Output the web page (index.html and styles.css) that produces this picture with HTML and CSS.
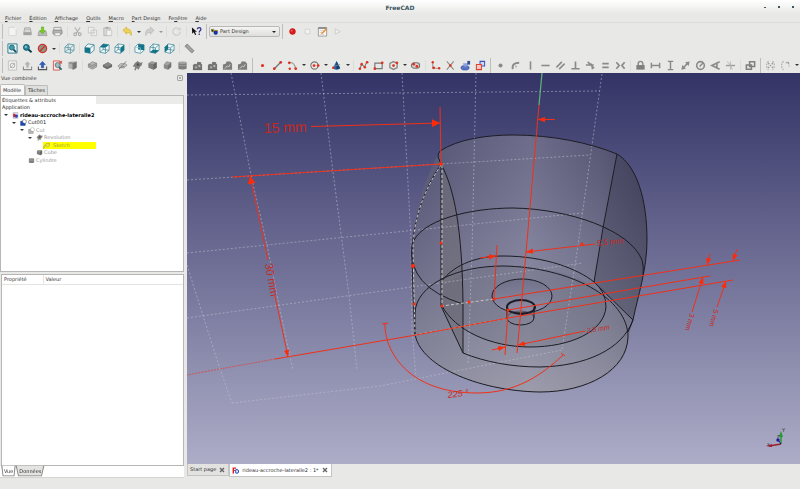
FILE: index.html
```html
<!DOCTYPE html>
<html lang="fr">
<head>
<meta charset="UTF-8">
<meta name="viewport" content="width=device-width, initial-scale=1.0">
<title>FreeCAD</title>
<link rel="stylesheet" href="styles.css">
</head>
<body>
<svg class="defs" aria-hidden="true">
  <defs>
    <!-- file and edit -->
    <symbol id="i-new" viewBox="0 0 12 12"><path d="M2 1.500h6l2 2v7H2z" fill="#f4f4f3" stroke="#cfcfcd" stroke-width=".8"/><path d="M8 1v3h3" fill="#fff" stroke="#dededc" stroke-width=".6"/></symbol>
    <symbol id="i-open" viewBox="0 0 12 12"><path d="M3 2h6l1 5H2z" fill="#ddd" stroke="#8c8c8a" stroke-width=".7"/><path d="M1.500 7h9v3h-9z" fill="#a2a2a0"/><path d="M3.500 4h5" stroke="#999" stroke-width=".6"/></symbol>
    <symbol id="i-save" viewBox="0 0 12 12"><path d="M2 6h8l1 4.500H1z" fill="#b9b9b7" stroke="#8f8f8d" stroke-width=".6"/><path d="M4.800 1h2.400v4h2L6 8.500 2.800 5h2z" fill="#73d216" stroke="#4e9a06" stroke-width=".5"/></symbol>
    <symbol id="i-print" viewBox="0 0 12 12"><path d="M2 1.500h8V5H2z" fill="#e8e8e6" stroke="#888" stroke-width=".7"/><rect x="1" y="4.500" width="10" height="4.500" rx="1" fill="#b5b5b3" stroke="#777" stroke-width=".7"/><path d="M3 7.500h6v3H3z" fill="#f5f5f5" stroke="#888" stroke-width=".6"/></symbol>
    <symbol id="i-cut" viewBox="0 0 12 12"><path d="M3 1.500l4.500 6.500M9 1.500L4.500 8" stroke="#b4b4b2" stroke-width="1.200"/><circle cx="3.500" cy="9" r="1.500" fill="none" stroke="#aaa" stroke-width="1.100"/><circle cx="8.500" cy="9" r="1.500" fill="none" stroke="#aaa" stroke-width="1.100"/></symbol>
    <symbol id="i-copy" viewBox="0 0 12 12"><path d="M1.500 1.500h6v6h-6zM4.500 4.500h6v6h-6z" fill="#efefed" stroke="#bfbfbd" stroke-width=".8"/><path d="M6 7h3M6 8.500h3" stroke="#c8c8c6" stroke-width=".6"/></symbol>
    <symbol id="i-paste" viewBox="0 0 12 12"><path d="M2 2h7v8.500H2z" fill="#d9d9d7" stroke="#adadab" stroke-width=".8"/><path d="M4 1h3v2H4z" fill="#a9a9a7"/><path d="M5 4.500h5.500v6H5z" fill="#f2f2f0" stroke="#bcbcba" stroke-width=".7"/></symbol>
    <symbol id="i-undo" viewBox="0 0 12 12"><path d="M1 4.500L5 1v2.200c4 0 6 2 5 7.300-.7-2.700-2-3.500-5-3.500v2z" fill="#edd25a" stroke="#c4a000" stroke-width=".5"/></symbol>
    <symbol id="i-redo" viewBox="0 0 12 12"><path d="M11 4.500L7 1v2.200c-4 0-6 2-5 7.300.7-2.700 2-3.500 5-3.500v2z" fill="#cfcfcd" stroke="#aaa" stroke-width=".5"/></symbol>
    <symbol id="i-refresh" viewBox="0 0 12 12"><path d="M10 6a4 4 0 1 1-1.500-3" fill="none" stroke="#d0d0ce" stroke-width="1.500"/><path d="M6.500 4.500H10.500V1z" fill="#d0d0ce"/></symbol>
    <symbol id="i-what" viewBox="0 0 12 12"><path d="M1 1.500l.3 7 1.700-1.600 1.500 3 1.200-.6-1.500-2.900 2.300-.2z" fill="#111"/><path d="M7 3.600C7 1 10.800 1.200 10.800 3.500 10.800 5 9 5.200 9 7" fill="none" stroke="#2d2d8e" stroke-width="1.400"/><circle cx="9" cy="9" r=".9" fill="#2d2d8e"/></symbol>
    <symbol id="i-record" viewBox="0 0 12 12"><circle cx="6" cy="6" r="3.200" fill="#e01b1b" stroke="#b40000" stroke-width=".5"/><circle cx="5" cy="5" r="1" fill="#f26d6d"/></symbol>
    <symbol id="i-stop" viewBox="0 0 12 12"><path d="M3.500 3.500h5v5h-5z" fill="#f3f3f1" stroke="#cbcbc9" stroke-width=".8"/></symbol>
    <symbol id="i-edit" viewBox="0 0 12 12"><path d="M1.500 2h9v9h-9z" fill="#f7f7f5" stroke="#777" stroke-width=".7"/><path d="M1.500 1.500h9v1.500h-9z" fill="#777"/><path d="M3 5h5M3 7h3M3 9h5" stroke="#bbb" stroke-width=".6"/><path d="M5 8.500L10.500 3" stroke="#f08a24" stroke-width="1.500"/></symbol>
    <symbol id="i-play" viewBox="0 0 12 12"><path d="M3.500 3l5.500 3-5.500 3z" fill="#eee" stroke="#c4c4c2" stroke-width=".8"/></symbol>
    <symbol id="i-part" viewBox="0 0 12 12"><path d="M1 2h4v2h6v3H5L1 6z" fill="#f0c419" stroke="#333" stroke-width=".6"/><path d="M1 2l3 2v3L1 5z" fill="#222"/><rect x="5" y="5" width="6" height="6" rx="2" fill="#1236b8" stroke="#0a1c66" stroke-width=".6"/></symbol>

    <!-- views -->
    <symbol id="i-fit" viewBox="0 0 12 12"><path d="M1 1h10v10H1z" fill="#e8f3f5" stroke="#17697c" stroke-width=".9"/><path d="M7 7l3 3" stroke="#0e4c5c" stroke-width="1.900"/><circle cx="5.300" cy="5" r="2.700" fill="#3f9cb0" stroke="#135f70" stroke-width=".9"/></symbol>
    <symbol id="i-zoom" viewBox="0 0 12 12"><path d="M7 7l3.500 3" stroke="#0b4250" stroke-width="2.200"/><circle cx="4.800" cy="4.800" r="3.200" fill="#2b8499" stroke="#0e5365" stroke-width="1"/><circle cx="4.200" cy="4.200" r="1.300" fill="#86c3cf"/></symbol>
    <symbol id="i-draw" viewBox="0 0 12 12"><circle cx="6" cy="6" r="4.500" fill="#8b9a91" stroke="#cf2e20" stroke-width="1.400"/><path d="M9.200 2.800L2.800 9.200" stroke="#cf2e20" stroke-width="1.500"/></symbol>
    <symbol id="i-wire" viewBox="0 0 12 12"><path d="M1 4.500l6 .8v6L1 10zM4.500 1l6.500 1v6l-6.500-1zM1 4.500L4.500 1M7 5.300L11 2M7 11.300L11 8M1 10l3.500-3" fill="none" stroke="#4a93a2" stroke-width=".8"/></symbol>
    <symbol id="i-front" viewBox="0 0 12 12"><path d="M1 4.500L4.500 1 11 2v6l-4 3.300L1 10z" fill="#eef6f7" stroke="#2b7c8e" stroke-width=".8"/><path d="M7 5.300L11 2" stroke="#2b7c8e" stroke-width=".8"/><path d="M1 4.500l6 .8v6L1 10z" fill="#137388"/></symbol>
    <symbol id="i-top" viewBox="0 0 12 12"><path d="M1 4.500L4.500 1 11 2v6l-4 3.300L1 10zM7 5.300v6M4.500 4v3L11 8M1 10l3.500-3" fill="#eef6f7" stroke="#2b7c8e" stroke-width=".7"/><path d="M1 4.500L4.500 1 11 2 7 5.300z" fill="#137388"/></symbol>
    <symbol id="i-right" viewBox="0 0 12 12"><path d="M1 4.500L4.500 1 11 2v6l-4 3.300L1 10zM1 4.500l6 .8M4.500 1v6l3 .5M1 10l3.500-3" fill="#eef6f7" stroke="#2b7c8e" stroke-width=".7"/><path d="M7 5.300L11 2v6l-4 3.300z" fill="#137388"/></symbol>
    <symbol id="i-rear" viewBox="0 0 12 12"><path d="M1 4.500L4.500 1 11 2v6l-4 3.300L1 10z" fill="#eef6f7" stroke="#2b7c8e" stroke-width=".7"/><path d="M4.500 1L11 2v6l-6.500-1z" fill="#137388"/><path d="M1 4.500l6 .8v6" fill="none" stroke="#8fc3cd" stroke-width=".8"/></symbol>
    <symbol id="i-bottom" viewBox="0 0 12 12"><path d="M1 4.500L4.500 1 11 2v6l-4 3.300L1 10zM1 4.500l6 .8v6M7 5.300L11 2M4.500 1v6" fill="#eef6f7" stroke="#2b7c8e" stroke-width=".7"/><path d="M1 10l3.500-3L11 8l-4 3.300z" fill="#137388"/></symbol>
    <symbol id="i-left" viewBox="0 0 12 12"><path d="M1 4.500L4.500 1 11 2v6l-4 3.300L1 10zM1 4.500l6 .8v6M7 5.300L11 2M4.500 7L11 8" fill="#eef6f7" stroke="#2b7c8e" stroke-width=".7"/><path d="M1 4.500L4.500 1v6L1 10z" fill="#137388"/></symbol>
    <symbol id="i-ruler" viewBox="0 0 12 12"><path d="M3.500 1L11 8.500 8.500 11 1 3.500z" fill="#9a9a98" stroke="#777" stroke-width=".7"/><path d="M4.500 3.500l-1 1M6 5L5 6M7.500 6.500l-1 1M9 8l-1 1" stroke="#ddd" stroke-width=".6"/></symbol>

    <!-- part design -->
    <symbol id="i-sketch" viewBox="0 0 12 12"><path d="M1.500 1h9v10h-9z" fill="#f0f0ee" stroke="#b5b5b3" stroke-width=".8"/><circle cx="6" cy="6" r="2.500" fill="none" stroke="#aaa"/><path d="M3 9l6-6" stroke="#aaa" stroke-width=".8"/></symbol>
    <symbol id="i-tray" viewBox="0 0 12 12"><path d="M1.500 7v3.500h9V7" fill="none" stroke="#8b8b89" stroke-width="1.200"/><path d="M5.200 8V4.500H3.500L6 2l2.500 2.500H6.800V8z" fill="#b8b8b6" stroke="#999" stroke-width=".5"/></symbol>
    <symbol id="i-leave" viewBox="0 0 12 12"><path d="M1.500 7v3.500h9V7" fill="none" stroke="#555" stroke-width="1.200"/><path d="M4.800 8.500V5H2.800L6 1.500 9.200 5h-2v3.500z" fill="#2460c8" stroke="#123a86" stroke-width=".5"/></symbol>
    <symbol id="i-viewsk" viewBox="0 0 12 12"><path d="M1.500 1h7v10h-7z" fill="#f6e5e3" stroke="#d34a3d" stroke-width=".9"/><path d="M7.500 7.500l3 3" stroke="#17697c" stroke-width="1.800"/><circle cx="6.200" cy="5.500" r="2.700" fill="#a2bac0" stroke="#56717a" stroke-width=".9"/><path d="M8 1h3v3H8z" fill="#d96257"/></symbol>
    <symbol id="i-solid" viewBox="0 0 12 12"><path d="M1.500 3L4 1.500h6.500v7L8 10.500 1.500 9z" fill="#b2b2b0"/><path d="M6 3.500l4.500-2v7L6 10.500z" fill="#767674"/><path d="M1.500 3L6 3.500" stroke="#666" stroke-width=".7"/></symbol>
    <symbol id="i-pad" viewBox="0 0 12 12"><path d="M1.500 4.500L6 2l4.500 1.500v4L6 10 1.500 8z" fill="#b9b9b7" stroke="#888" stroke-width=".8"/><path d="M1.500 6.200L6 8l4.500-2.600M1.500 4.500L6 6l4.500-2.500" fill="none" stroke="#7d7d7b" stroke-width=".9"/></symbol>
    <symbol id="i-pocket" viewBox="0 0 12 12"><path d="M1 5.500L6.500 2.500 11 5v2.500L5.500 10 1 7.500z" fill="#6c6c6a"/><path d="M1 5.500l5.500-3L11 5 5.500 7.600z" fill="#868684"/></symbol>
    <symbol id="i-groove" viewBox="0 0 12 12"><path d="M1 6.500L4 4h5l2 1.500L8 8.500H3z" fill="#c0c0be" stroke="#8c8c8a" stroke-width=".8"/><path d="M2 10L10 1.500M4 8l4-1" stroke="#7d7d7b" stroke-width="1"/></symbol>
    <symbol id="i-rev" viewBox="0 0 12 12"><path d="M3 3.500L6 1l3 2 2.500-.5-1 3.500-2 1.500-1 3-2.500-1.500-1 2.500-1.500-.5 1-3.500L.8 7z" fill="#80807e"/><circle cx="6.500" cy="5" r="1.500" fill="#555553"/></symbol>
    <symbol id="i-box" viewBox="0 0 12 12"><path d="M1.500 3.500L5 1.500l5.500 1v6L7 10.500l-5.500-2z" fill="#7e7e7c"/><path d="M1.500 3.500L5 1.500l5.500 1L7 4.500z" fill="#9d9d9b"/><path d="M7 4.500l3.500-2v6L7 10.500z" fill="#666664"/></symbol>
    <symbol id="i-cham" viewBox="0 0 12 12"><path d="M2 5l3-3.500 5 1v5L6.500 10.500 2 9z" fill="#8a8a88"/><path d="M5 1.500l5 1L6.500 6 2 5z" fill="#a3a3a1"/><path d="M6.500 6L10 2.500v5l-3.500 3z" fill="#757573"/></symbol>
    <symbol id="i-cyl" viewBox="0 0 12 12"><path d="M1.500 3h9v6.500c-2 1.200-7 1.200-9 0z" fill="#80807e"/><ellipse cx="6" cy="3" rx="4.500" ry="1.300" fill="#a4a4a2"/><path d="M1.500 6h9" stroke="#a7a7a5" stroke-width=".8"/></symbol>
    <symbol id="i-patt" viewBox="0 0 12 12"><path d="M1 5.500L3 4l2 .5L6 2l4 .5V4l1 .5v6H1z" fill="#757573"/><path d="M3.500 7h2v2h-2zM7 5.500h2v2H7z" fill="#b9b9b7"/><path d="M1 10.500h10" stroke="#555" stroke-width=".8"/></symbol>
    <symbol id="i-multi" viewBox="0 0 12 12"><path d="M1 5l3-1 1-2.500h4L11 4v6.500H1z" fill="#7d7d7b"/><path d="M3 9.500l2.500-3 2 1L9 4.500" fill="none" stroke="#cacac8" stroke-width="1"/></symbol>

    <!-- sketcher geometry -->
    <symbol id="i-point" viewBox="0 0 12 12"><circle cx="6" cy="6" r="1.700" fill="#e0301e"/></symbol>
    <symbol id="i-line" viewBox="0 0 12 12"><path d="M2.500 9.500l7-7" stroke="#777" stroke-width="1.500"/><g fill="#d6301e"><circle cx="2.500" cy="9.500" r="1.500"/><circle cx="9.500" cy="2.500" r="1.500"/></g></symbol>
    <symbol id="i-arc" viewBox="0 0 12 12"><path d="M2 3c4-1 7 2 7.500 7" fill="none" stroke="#999" stroke-width="1.200"/><g fill="#e0301e"><circle cx="2.500" cy="3" r="1.500"/><circle cx="9.500" cy="9.500" r="1.500"/><circle cx="3" cy="9.500" r="1.300"/></g></symbol>
    <symbol id="i-circle" viewBox="0 0 12 12"><circle cx="6" cy="6" r="4" fill="none" stroke="#777" stroke-width="1.200"/><g fill="#e0301e"><circle cx="5.500" cy="6" r="1.500"/><circle cx="10" cy="6" r="1.500"/></g></symbol>
    <symbol id="i-conic" viewBox="0 0 12 12"><path d="M6 1l4 8c-1 2-7 2-8 0z" fill="#1d63a8"/><path d="M6 1l4 8-4 1z" fill="#123d70"/><path d="M3 7l7-2" stroke="#888" stroke-width=".8"/><circle cx="2.500" cy="8.500" r="1.400" fill="#e0301e"/></symbol>
    <symbol id="i-poly" viewBox="0 0 12 12"><path d="M2 9.500l2-5 3 3 3-6" fill="none" stroke="#777" stroke-width="1.200"/><g fill="#e0301e"><circle cx="2" cy="9.500" r="1.400"/><circle cx="4" cy="4.500" r="1.400"/><circle cx="7.500" cy="8" r="1.400"/><circle cx="10" cy="2.500" r="1.400"/></g></symbol>
    <symbol id="i-rect" viewBox="0 0 12 12"><path d="M2 3.500h8v6H2z" fill="none" stroke="#777" stroke-width="1.300"/><g fill="#e0301e"><circle cx="2" cy="9.500" r="1.500"/><circle cx="10" cy="3" r="1.500"/></g></symbol>
    <symbol id="i-hexa" viewBox="0 0 12 12"><path d="M6 1.700l4 2v4.600l-4 2-4-2V3.700z" fill="none" stroke="#888" stroke-width="1.400"/><g fill="#e0301e"><circle cx="6" cy="6" r="1.500"/><circle cx="9.700" cy="3" r="1.500"/></g></symbol>
    <symbol id="i-slot" viewBox="0 0 12 12"><rect x="1.500" y="3" width="9" height="6" rx="3" fill="#d0d0ce" stroke="#777" stroke-width="1.200"/><g fill="#e0301e"><circle cx="4" cy="4.500" r="1.500"/><circle cx="7.500" cy="7" r="1.500"/></g></symbol>
    <symbol id="i-fillet" viewBox="0 0 12 12"><path d="M3 2v7h7" fill="none" stroke="#999" stroke-width="1.200"/><g fill="#e0301e"><circle cx="3" cy="2.500" r="1.300"/><circle cx="4" cy="8.500" r="1.500"/><circle cx="10" cy="9" r="1.300"/></g></symbol>
    <symbol id="i-trim" viewBox="0 0 12 12"><path d="M2 1.500l7.500 9M9.500 1.500L2 10.500" stroke="#888" stroke-width="1.100"/><circle cx="5.800" cy="6" r="1.400" fill="#e0301e"/></symbol>
    <symbol id="i-ext" viewBox="0 0 12 12"><ellipse cx="5.500" cy="8.500" rx="4.500" ry="2.500" fill="#5a74c4" stroke="#2f4590" stroke-width=".6"/><path d="M3 3.500h6l-1 3.500H4.500z" fill="#8da2dd"/><path d="M8 1h3v4H8z" fill="#354b96"/></symbol>
    <symbol id="i-constr" viewBox="0 0 12 12"><path d="M5.500 1.500h5v5h-5z" fill="#d3d8f2" stroke="#3c50c0" stroke-width="1.100"/><path d="M1.500 5h5.500v5.500H1.500z" fill="#f4c9c5" stroke="#e0402e" stroke-width="1.100"/></symbol>

    <!-- constraints -->
    <symbol id="c-point" viewBox="0 0 12 12"><circle cx="6" cy="6" r="2.200" fill="#8a8a88"/></symbol>
    <symbol id="c-onobj" viewBox="0 0 12 12"><path d="M3 10C2 5 5 3 10 3" fill="none" stroke="#8a8a88" stroke-width="2"/><circle cx="6.500" cy="7" r="1.100" fill="#b0b0ae"/></symbol>
    <symbol id="c-vert" viewBox="0 0 12 12"><path d="M6 1.500v9" stroke="#8a8a88" stroke-width="1.700"/></symbol>
    <symbol id="c-hori" viewBox="0 0 12 12"><path d="M1.500 6h9" stroke="#8a8a88" stroke-width="1.700"/></symbol>
    <symbol id="c-para" viewBox="0 0 12 12"><path d="M1.500 8l6-6M4.500 10l6-6" stroke="#8a8a88" stroke-width="1.700"/></symbol>
    <symbol id="c-perp" viewBox="0 0 12 12"><path d="M6 1.500v8M1.500 9.500h9" stroke="#8a8a88" stroke-width="1.800"/></symbol>
    <symbol id="c-tan" viewBox="0 0 12 12"><path d="M3 2l7 7M1 5.500h8.500M8 10c0-3 0-5-2-6" fill="none" stroke="#8a8a88" stroke-width="1.700"/></symbol>
    <symbol id="c-equal" viewBox="0 0 12 12"><path d="M2.500 4h7M2.500 8h7" stroke="#8a8a88" stroke-width="2"/></symbol>
    <symbol id="c-sym" viewBox="0 0 12 12"><path d="M1.500 2.500L4.500 6l-3 3.500M10.500 2.500L7.500 6l3 3.500" fill="none" stroke="#8a8a88" stroke-width="1.900"/></symbol>
    <symbol id="c-lock" viewBox="0 0 12 12"><path d="M1.500 5.500h9V10.500h-9z" fill="#7f7f7d"/><path d="M3.500 6V4a2.500 2.500 0 0 1 5 0v2" fill="none" stroke="#8a8a88" stroke-width="1.600"/></symbol>
    <symbol id="c-hdist" viewBox="0 0 12 12"><path d="M1.500 3v6M10.500 3v6M1.500 6h9" stroke="#8a8a88" stroke-width="1.600"/></symbol>
    <symbol id="c-vdist" viewBox="0 0 12 12"><path d="M3 1.500h6M3 10.500h6M6 1.500v9" stroke="#8a8a88" stroke-width="1.600"/></symbol>
    <symbol id="c-dist" viewBox="0 0 12 12"><path d="M3 9l6-6" stroke="#8a8a88" stroke-width="1.900"/><path d="M1.500 10.500l1-5L6.500 9.500zM10.500 1.500l-1 5L5.500 2.500z" fill="#8a8a88"/></symbol>
    <symbol id="c-rad" viewBox="0 0 12 12"><circle cx="6" cy="6" r="4.200" fill="none" stroke="#8a8a88" stroke-width="1.700"/><path d="M5 7l4-4" stroke="#8a8a88" stroke-width="1.600"/></symbol>
    <symbol id="c-angle" viewBox="0 0 12 12"><path d="M10.500 2L2 6l8.500 4M7.500 4v4.500" fill="none" stroke="#8a8a88" stroke-width="1.800"/></symbol>
    <symbol id="c-snell" viewBox="0 0 12 12"><path d="M1 6h10" stroke="#9a9a98" stroke-width="1.500"/><path d="M2.500 1.500L6 6l2 4.500M6 1.500v9" fill="none" stroke="#b4b4b2" stroke-width=".9"/></symbol>
    <symbol id="c-toggle" viewBox="0 0 12 12"><path d="M5 2h5.500v5H5zM1.500 5.500H7v4.500H1.500z" fill="none" stroke="#80807e" stroke-width="1.700"/></symbol>
    <symbol id="c-close" viewBox="0 0 12 12"><path d="M4 1.500C1 3 1 9 4 10.500M8 1.500c3 1.500 3 7.500 0 9" fill="none" stroke="#b4b4b2" stroke-width="1.400" stroke-dasharray="2 1"/><g fill="#999"><circle cx="4" cy="4" r=".9"/><circle cx="4" cy="8" r=".9"/><circle cx="6" cy="6" r=".9"/><circle cx="8" cy="4" r=".9"/><circle cx="8" cy="8" r=".9"/></g></symbol>
    <symbol id="c-connect" viewBox="0 0 12 12"><path d="M4 1.500C1 3 1 9 4 10.500M6 3c3-1 4 1 4 4" fill="none" stroke="#b4b4b2" stroke-width="1.400" stroke-dasharray="2 1"/><circle cx="9" cy="3" r="1" fill="#999"/></symbol>

    <!-- tree -->
    <symbol id="t-doc" viewBox="0 0 12 12"><path d="M2 1h8v10H2z" fill="#e4e6f4" stroke="#889" stroke-width=".7"/><path d="M2 3h4v6H2z" fill="#d22"/><circle cx="7.500" cy="7" r="2.800" fill="#2246b4"/></symbol>
    <symbol id="t-cut" viewBox="0 0 12 12"><circle cx="7.500" cy="4.500" r="3.500" fill="#fff" stroke="#445" stroke-width=".9"/><path d="M1 4h3c0 2 2 4 5 4v3H1z" fill="#1e49bd" stroke="#122b78" stroke-width=".7"/></symbol>
    <symbol id="t-cut2" viewBox="0 0 12 12"><circle cx="7.500" cy="4.500" r="3.500" fill="#fff" stroke="#aaa" stroke-width=".9"/><path d="M1 4h3c0 2 2 4 5 4v3H1z" fill="#b5b5b3" stroke="#888" stroke-width=".7"/></symbol>
    <symbol id="t-sketch" viewBox="0 0 12 12"><path d="M1 8l4-5 6-1v4L8 9 5 6l-4 5z" fill="#e6e64a" stroke="#8f8f22" stroke-width=".8"/></symbol>
    <symbol id="i-free" viewBox="0 0 12 12"><path d="M1 1h6v2.200H3.500V5H6v2H3.500v4H1z" fill="#e0201b"/><path d="M6.500 5a3 3 0 1 1 0 5z" fill="#fff" stroke="#1b48c4" stroke-width="1.800"/></symbol>
    <symbol id="i-x" viewBox="0 0 12 12"><path d="M2 2l8 8M10 2l-8 8" stroke="#666" stroke-width="2.800"/></symbol>
    <symbol id="i-dockx" viewBox="0 0 12 12"><rect x="1" y="1" width="10" height="10" rx="1.500" fill="#eee" stroke="#888" stroke-width="1.500"/><path d="M3.500 8.500l5-5M3.500 3.500l5 5" stroke="#888" stroke-width="1.300"/></symbol>
    <marker id="arrow" viewBox="0 0 8 8" refX="8" refY="4" markerWidth="7" markerHeight="7" markerUnits="userSpaceOnUse" orient="auto"><path d="M0 1L8 4 0 7z" fill="#ff2a08"/></marker>
    <marker id="arrow-big" viewBox="0 0 8 8" refX="8" refY="4" markerWidth="8" markerHeight="8" markerUnits="userSpaceOnUse" orient="auto"><path d="M0 0L8 4 0 8z" fill="#ff2a08"/></marker>
  </defs>
</svg>

<div class="window">
  <header class="titlebar">
    <h1>FreeCAD</h1>
    <div class="wm">
      <button class="wm-min" aria-label="Réduire"></button>
      <button aria-label="Agrandir"></button>
      <button aria-label="Fermer"></button>
    </div>
  </header>

  <nav class="menubar">
    <a href="#"><u>F</u>ichier</a>
    <a href="#"><u>É</u>dition</a>
    <a href="#"><u>A</u>ffichage</a>
    <a href="#"><u>O</u>utils</a>
    <a href="#"><u>M</u>acro</a>
    <a href="#"><u>P</u>art Design</a>
    <a href="#">Fe<u>n</u>être</a>
    <a href="#"><u>A</u>ide</a>
  </nav>

  <div class="toolbar">
    <span class="handle"></span>
    <button aria-label="Nouveau"><svg><use href="#i-new"/></svg></button>
    <button aria-label="Ouvrir"><svg><use href="#i-open"/></svg></button>
    <button aria-label="Enregistrer"><svg><use href="#i-save"/></svg></button>
    <button aria-label="Imprimer"><svg><use href="#i-print"/></svg></button>
    <span class="sep"></span>
    <button aria-label="Couper"><svg><use href="#i-cut"/></svg></button>
    <button aria-label="Copier"><svg><use href="#i-copy"/></svg></button>
    <button aria-label="Coller"><svg><use href="#i-paste"/></svg></button>
    <span class="sep"></span>
    <button aria-label="Annuler"><svg><use href="#i-undo"/></svg></button>
    <button class="more" aria-label="Liste des annulations"></button>
    <button aria-label="Rétablir"><svg><use href="#i-redo"/></svg></button>
    <button class="more off" aria-label="Liste à rétablir"></button>
    <span class="sep"></span>
    <button aria-label="Rafraîchir"><svg><use href="#i-refresh"/></svg></button>
    <span class="sep"></span>
    <button aria-label="Qu'est-ce que c'est ?"><svg><use href="#i-what"/></svg></button>
    <span class="handle"></span>
    <div class="workbench">
      <svg><use href="#i-part"/></svg>
      <select aria-label="Atelier"><option>Part Design</option></select>
    </div>
    <span class="handle"></span>
    <button aria-label="Enregistrer une macro"><svg><use href="#i-record"/></svg></button>
    <button aria-label="Arrêter"><svg><use href="#i-stop"/></svg></button>
    <button aria-label="Macros"><svg><use href="#i-edit"/></svg></button>
    <button aria-label="Exécuter"><svg><use href="#i-play"/></svg></button>
  </div>

  <div class="toolbar">
    <span class="handle"></span>
    <button aria-label="Tout afficher"><svg><use href="#i-fit"/></svg></button>
    <button aria-label="Zoom"><svg><use href="#i-zoom"/></svg></button>
    <button aria-label="Style de représentation"><svg><use href="#i-draw"/></svg></button>
    <button class="more" aria-label="Styles"></button>
    <span class="sep"></span>
    <button aria-label="Axonométrique"><svg><use href="#i-wire"/></svg></button>
    <span class="sep"></span>
    <button aria-label="Face"><svg><use href="#i-front"/></svg></button>
    <button aria-label="Dessus"><svg><use href="#i-top"/></svg></button>
    <button aria-label="Droite"><svg><use href="#i-right"/></svg></button>
    <span class="sep"></span>
    <button aria-label="Arrière"><svg><use href="#i-rear"/></svg></button>
    <button aria-label="Dessous"><svg><use href="#i-bottom"/></svg></button>
    <button aria-label="Gauche"><svg><use href="#i-left"/></svg></button>
    <span class="sep"></span>
    <button aria-label="Mesurer"><svg><use href="#i-ruler"/></svg></button>
  </div>

  <div class="toolbar">
    <span class="handle"></span>
    <button aria-label="Nouvelle esquisse"><svg><use href="#i-sketch"/></svg></button>
    <button aria-label="Modifier l'esquisse"><svg><use href="#i-tray"/></svg></button>
    <button aria-label="Quitter l'esquisse"><svg><use href="#i-leave"/></svg></button>
    <button aria-label="Vue de l'esquisse"><svg><use href="#i-viewsk"/></svg></button>
    <button aria-label="Appliquer l'esquisse"><svg><use href="#i-solid"/></svg></button>
    <span class="sep"></span>
    <button aria-label="Protrusion"><svg><use href="#i-pad"/></svg></button>
    <button aria-label="Cavité"><svg><use href="#i-pocket"/></svg></button>
    <button aria-label="Rainure"><svg><use href="#i-groove"/></svg></button>
    <button aria-label="Révolution"><svg><use href="#i-rev"/></svg></button>
    <button aria-label="Congé"><svg><use href="#i-box"/></svg></button>
    <button aria-label="Chanfrein"><svg><use href="#i-cham"/></svg></button>
    <button aria-label="Dépouille"><svg><use href="#i-cyl"/></svg></button>
    <button aria-label="Symétrie"><svg><use href="#i-patt"/></svg></button>
    <button aria-label="Répétition linéaire"><svg><use href="#i-patt"/></svg></button>
    <button aria-label="Répétition circulaire"><svg><use href="#i-multi"/></svg></button>
    <button aria-label="Transformation multiple"><svg><use href="#i-multi"/></svg></button>
    <span class="handle"></span>
    <button aria-label="Point"><svg><use href="#i-point"/></svg></button>
    <button aria-label="Ligne"><svg><use href="#i-line"/></svg></button>
    <button aria-label="Arc"><svg><use href="#i-arc"/></svg></button>
    <button class="more" aria-label="Arcs"></button>
    <button aria-label="Cercle"><svg><use href="#i-circle"/></svg></button>
    <button class="more" aria-label="Cercles"></button>
    <button aria-label="Conique"><svg><use href="#i-conic"/></svg></button>
    <button class="more" aria-label="Coniques"></button>
    <span class="sep"></span>
    <button aria-label="Polyligne"><svg><use href="#i-poly"/></svg></button>
    <button aria-label="Rectangle"><svg><use href="#i-rect"/></svg></button>
    <button aria-label="Polygone"><svg><use href="#i-hexa"/></svg></button>
    <button class="more" aria-label="Polygones"></button>
    <button aria-label="Rainure droite"><svg><use href="#i-slot"/></svg></button>
    <span class="sep"></span>
    <button aria-label="Congé d'esquisse"><svg><use href="#i-fillet"/></svg></button>
    <button aria-label="Ajuster"><svg><use href="#i-trim"/></svg></button>
    <button aria-label="Géométrie externe"><svg><use href="#i-ext"/></svg></button>
    <button aria-label="Construction"><svg><use href="#i-constr"/></svg></button>
    <span class="handle"></span>
    <button aria-label="Coïncidence"><svg><use href="#c-point"/></svg></button>
    <button aria-label="Point sur objet"><svg><use href="#c-onobj"/></svg></button>
    <button aria-label="Verticale"><svg><use href="#c-vert"/></svg></button>
    <button aria-label="Horizontale"><svg><use href="#c-hori"/></svg></button>
    <button aria-label="Parallèle"><svg><use href="#c-para"/></svg></button>
    <button aria-label="Perpendiculaire"><svg><use href="#c-perp"/></svg></button>
    <button aria-label="Tangente"><svg><use href="#c-tan"/></svg></button>
    <button aria-label="Égalité"><svg><use href="#c-equal"/></svg></button>
    <button aria-label="Contrainte de symétrie"><svg><use href="#c-sym"/></svg></button>
    <span class="sep"></span>
    <button aria-label="Verrouiller"><svg><use href="#c-lock"/></svg></button>
    <button aria-label="Distance horizontale"><svg><use href="#c-hdist"/></svg></button>
    <button aria-label="Distance verticale"><svg><use href="#c-vdist"/></svg></button>
    <button aria-label="Distance"><svg><use href="#c-dist"/></svg></button>
    <button aria-label="Rayon"><svg><use href="#c-rad"/></svg></button>
    <button aria-label="Angle"><svg><use href="#c-angle"/></svg></button>
    <button aria-label="Réfraction"><svg><use href="#c-snell"/></svg></button>
    <span class="sep"></span>
    <button aria-label="Contrainte pilotante"><svg><use href="#c-toggle"/></svg></button>
    <span class="handle"></span>
    <button aria-label="Fermer la forme"><svg><use href="#c-close"/></svg></button>
    <button aria-label="Connecter"><svg><use href="#c-connect"/></svg></button>
    <button class="more" aria-label="Outils d'esquisse"></button>
  </div>

  <main class="workspace">
    <aside class="dock">
      <div class="dock-title">
        <h2>Vue combinée</h2>
        <button aria-label="Fermer le panneau"><svg><use href="#i-dockx"/></svg></button>
      </div>
      <div class="tabs">
        <button class="tab active">Modèle</button>
        <button class="tab">Tâches</button>
      </div>
      <div class="tree-box">
        <div class="tree-head"><span>Étiquettes &amp; attributs</span></div>
        <ul class="tree">
          <li>Application</li>
          <li class="lv1 bold"><i class="open"></i><svg><use href="#t-doc"/></svg>rideau-accroche-lateralle2</li>
          <li class="lv2"><i class="open"></i><svg><use href="#t-cut"/></svg>Cut001</li>
          <li class="lv3 hid"><i class="open"></i><svg><use href="#t-cut2"/></svg>Cut</li>
          <li class="lv4 hid"><i class="open"></i><svg><use href="#i-rev"/></svg>Revolution</li>
          <li class="lv5 hid"><span class="selected"><svg><use href="#t-sketch"/></svg>Sketch</span></li>
          <li class="lv4 hid"><i></i><svg><use href="#i-box"/></svg>Cube</li>
          <li class="lv3 hid"><i></i><svg><use href="#i-cyl"/></svg>Cylindre</li>
        </ul>
      </div>
      <div class="props">
        <table>
          <thead><tr><th class="name">Propriété</th><th>Valeur</th></tr></thead>
        </table>
      </div>
      <div class="slant-tabs">
        <button class="slant active">Vue</button>
        <button class="slant">Données</button>
      </div>
    </aside>

    <section class="mdi">
      <svg class="scene" viewBox="187 73 613 391" preserveAspectRatio="xMidYMid slice" role="img" aria-label="Vue 3D">
        <defs>
          <linearGradient id="wall" x1="412" x2="647" y1="0" y2="0" gradientUnits="userSpaceOnUse">
            <stop offset="0" stop-color="#5c5c78"/>
            <stop offset=".2" stop-color="#74748c"/>
            <stop offset=".5" stop-color="#9292a8"/>
            <stop offset=".8" stop-color="#6a6a80"/>
            <stop offset="1" stop-color="#444458"/>
          </linearGradient>
          <linearGradient id="shade" x1="0" x2="0" y1="135" y2="392" gradientUnits="userSpaceOnUse">
            <stop offset="0" stop-color="#30303e" stop-opacity=".1"/>
            <stop offset=".4" stop-color="#808090" stop-opacity=".2"/>
            <stop offset="1" stop-color="#a0a0aa" stop-opacity=".6"/>
          </linearGradient>
          <linearGradient id="cone" x1="0" x2="0" y1="279" y2="313" gradientUnits="userSpaceOnUse">
            <stop offset="0" stop-color="#6a6a84"/>
            <stop offset="1" stop-color="#9494b0"/>
          </linearGradient>
        </defs>

        <!-- solid faces -->
        <path d="M440 151C458 139 487 135 513 135C553 135 590 143 617 154C637 166 647 200 647 240C647 270 638 295 633 320L628 340C626 372 588 392 540 392C480 391 419 368 415 333C409 280 406 220 435 160Z" fill="url(#wall)" opacity=".6"/>
        <path d="M440 151C458 139 487 135 513 135C553 135 590 143 617 154C637 166 647 200 647 240C647 270 638 295 633 320L628 340C626 372 588 392 540 392C480 391 419 368 415 333C409 280 406 220 435 160Z" fill="url(#shade)"/>
        <path d="M617 154C637 166 647 200 647 240C647 270 638 295 633 320L594 282Z" fill="#33334a" opacity=".3"/>
        <path d="M441 165C455 190 462 230 463 303V353L441 306Z" fill="#6c6c74" opacity=".6"/>
        <path d="M441 306C455 330 490 347 530 347C575 345 606 330 606 307C603 280 555 266 503 266C475 266 450 277 441 290Z" fill="#60606c" opacity=".2"/>
        <ellipse cx="522" cy="296" rx="30" ry="17" fill="url(#cone)" opacity=".65"/>

        <!-- sketch grid -->
        <g class="grid">
          <path d="M231 73L251 175L267 245L279 305L293 370"/>
          <path d="M321 73L333 172L349 295L357 370"/>
          <path d="M187 265L204 319L220 369L232 403"/>
          <path d="M402 73L411 239L412 330L416 377"/>
          <path d="M476 73L472 252L468 363"/>
          <path d="M602 74L577 252L562 350"/>
          <path d="M187 95L600 91"/>
          <path d="M187 180L441 164L590 155"/>
          <path d="M187 253L397 232L582 213"/>
          <path d="M187 318L397 289L583 263"/>
          <path d="M232 403L380 386L562 350"/>
        </g>

        <!-- solid edges -->
        <g class="edge">
          <path d="M441 164L438 157Q438 153 440 151C458 139 487 135 513 135C553 135 590 143 617 154C637 166 647 200 647 240C647 270 638 295 633 320L628 332"/>
          <path d="M412 245C419 220 470 208 513 208C570 209 630 230 642 260Q644 267 643 275"/>
          <path d="M441 164C424 189 411 225 412 260Q413 300 415 335"/>
          <path d="M412 245Q407 287 463 304"/>
          <path d="M441 164C455 190 462 230 463 303V353L441 306V165"/>
          <path d="M617 154L603 228L594 282L633 320"/>
          <path d="M441 282C455 263 480 256 503 256C545 256 578 269 594 282"/>
          <path d="M415 313C416 285 456 266 503 266C570 267 628 298 628 337C627 370 588 392 540 392C475 391 418 364 415 333V313"/>
          <path d="M463 353C485 362 512 367 540 367C585 366 622 350 633 320"/>
          <path d="M594 282Q606 292 606 307C604 332 570 347 530 347C490 347 455 330 442 306"/>
          <ellipse cx="522" cy="296" rx="30" ry="17"/>
          <ellipse cx="521" cy="307" rx="14" ry="7" stroke-width="2"/>
          <path d="M507 307V318A13.500 7 0 0 0 534 318V307"/>
          <path d="M507 318A13.500 7 0 0 1 534 318" opacity=".5"/>
        </g>
        <g class="profile">
          <path d="M441 165C424 190 413 220 413 250L415 335L508 318"/>
          <path d="M442 165V306L494 299"/>
        </g>

        <!-- constraints -->
        <path d="M542 73L539 105" stroke="#5fae78" stroke-width="1.300" fill="none"/>
        <g class="dim">
          <path d="M311 126.500L440 123" marker-end="url(#arrow-big)"/>
          <path d="M440 107L441 164"/>
          <path d="M232 177L441 164"/>
          <path d="M555 119.500H538" marker-end="url(#arrow)"/>
          <path d="M539 105L528 230L517 353"/>
          <path d="M268 260L250 176" marker-end="url(#arrow-big)"/>
          <path d="M275 296L288 357" marker-end="url(#arrow)"/>
          <path d="M203 372L187 375M275 359L203 372" stroke-dasharray="2 1" opacity=".6"/>
          <path d="M275 359L416 335L508 318L733 280"/>
          <path d="M508 310L710 276"/>
          <path d="M494 299L740 260"/>
          <path d="M497 245L494 299M508 310L505 355"/>
          <path d="M480 258L496 256" marker-end="url(#arrow)"/>
          <path d="M492 350L505 347" marker-end="url(#arrow)"/>
          <path d="M595 244L526 252" marker-end="url(#arrow)"/>
          <path d="M585 331L518 345" marker-end="url(#arrow)"/>
          <path d="M710 254L707 265" marker-end="url(#arrow)"/>
          <path d="M737 249L733 261" marker-end="url(#arrow)"/>
          <path d="M692 312L703 277" marker-end="url(#arrow)"/>
          <path d="M717 307L726 281" marker-end="url(#arrow)"/>
          <path d="M385 323C384 350 407 393 477 393C515 393 541 376 563 355M382 324L388 323M561 353L565 356"/>
        </g>
        <g class="pts">
          <circle cx="441" cy="164" r="1.800"/><circle cx="441" cy="243" r="1.500"/><circle cx="413" cy="266" r="2"/>
          <circle cx="414" cy="304" r="1.500"/><circle cx="442" cy="306" r="1.500"/><circle cx="469" cy="302" r="1.500"/>
          <circle cx="494" cy="299" r="1.500"/><circle cx="508" cy="310" r="1.500"/><circle cx="582" cy="244" r="1.500"/>
        </g>
        <g class="dim-text">
          <text transform="translate(264 133) rotate(-2)" font-size="14">15 mm</text>
          <text transform="translate(265 264) rotate(80)" font-size="11">30 mm</text>
          <text transform="translate(597 246) rotate(-6)" font-size="8" font-style="italic">5,5 mm</text>
          <text transform="translate(587 333) rotate(-9)" font-size="7" font-style="italic">2,5 mm</text>
          <text transform="translate(448 398) rotate(-7)" font-size="9" font-style="italic">225 °</text>
          <text transform="translate(690 313) rotate(106)" font-size="7">3 mm</text>
          <text transform="translate(714 309) rotate(106)" font-size="7">5 mm</text>
        </g>

        <!-- axis cross -->
        <g class="axes">
          <path d="M781 444L769 446" stroke="#9c1f2c" stroke-width="1.600"/>
          <path d="M766 446l6-2v3z" fill="#9c1f2c"/>
          <path d="M781 444V434" stroke="#1f9a2c" stroke-width="1.400"/>
          <path d="M781 431l2 6h-4z" fill="#1f9a2c"/>
          <path d="M781 444L779 441" stroke="#1c1c90"/>
          <circle cx="778" cy="440" r="1.700" fill="#1c1c90"/>
          <text x="782" y="432" font-size="5">Y</text>
          <text x="767" y="446" font-size="4">X</text>
          <text x="777" y="438" font-size="4">Z</text>
        </g>
      </svg>
      <div class="doc-tabs">
        <div class="doc-tab"><a href="#">Start page</a><button aria-label="Fermer Start page"><svg><use href="#i-x"/></svg></button></div>
        <div class="doc-tab active"><svg class="logo"><use href="#i-free"/></svg><a href="#">rideau-accroche-lateralle2 : 1*</a><button aria-label="Fermer rideau-accroche-lateralle2"><svg><use href="#i-x"/></svg></button></div>
      </div>
    </section>
  </main>
  <footer class="statusbar"></footer>
</div>
</body>
</html>
```

FILE: styles.css
```css
* {
  box-sizing: border-box;
}
body {
  margin: 0;
  font-family: "DejaVu Sans", "Noto Sans", sans-serif;
  font-size: 5px;
  line-height: 7px;
  color: #303030;
  background: #e8e8e6;
}
button {
  font: inherit;
  color: inherit;
  padding: 0;
  border: none;
  background: none;
}
a {
  color: inherit;
  text-decoration: none;
}
h1, h2 {
  margin: 0;
  font-size: 5px;
}
.defs {
  position: absolute;
  width: 0;
  height: 0;
}
.window {
  display: flex;
  flex-direction: column;
  height: 100vh;
  overflow: hidden;
}

/* title and menu */
.titlebar {
  display: grid;
  grid-template-columns: 1fr auto 1fr;
  align-items: center;
  height: 14px;
  flex: none;
  padding: 0 6px;
  background: linear-gradient(#ffffff, #e8e8e6);
}
.titlebar h1 {
  grid-column: 2;
  font-size: 6px;
  color: #3d5560;
}
.wm {
  display: flex;
  justify-content: flex-end;
  align-items: center;
  gap: 12px;
}
.wm button {
  width: 2px;
  height: 2px;
  background: #3d5560;
}
.wm .wm-min {
  height: 1px;
}
.menubar {
  display: flex;
  flex: none;
  gap: 8px;
  height: 9px;
  padding: 1px 5px 0;
  border-bottom: 1px solid #dadad8;
}

/* toolbars */
.toolbar {
  display: flex;
  flex: none;
  align-items: center;
  height: 17px;
}
.toolbar:nth-of-type(3) {
  height: 16px;
}
.toolbar > * {
  flex: none;
}
.toolbar button {
  display: flex;
  align-items: center;
  justify-content: center;
  width: 15px;
  height: 15px;
}
.toolbar svg {
  width: 11px;
  height: 11px;
}
.toolbar .more {
  width: 7px;
}
.more::after,
.open::after {
  content: "";
  border: 2px solid transparent;
  border-top: 2px solid #333;
  border-bottom: none;
}
.more.off::after {
  border-top-color: #999;
}
.sep, .handle {
  width: 5px;
  height: 11px;
  background: linear-gradient(#dcdcda, #dcdcda) center / 1px 100% no-repeat;
}
.handle {
  height: 15px;
  background-image: linear-gradient(#bebebc, #bebebc);
}
.workbench {
  position: relative;
  width: 71px;
}
.workbench svg {
  position: absolute;
  left: 2px;
  top: 2px;
  width: 7px;
  height: 7px;
}
.workbench select {
  display: block;
  width: 100%;
  height: 11px;
  padding: 0 10px;
  font: inherit;
  color: inherit;
  appearance: none;
  border: 1px solid #b8b8b6;
  border-radius: 2px;
  background: linear-gradient(#f4f4f3, #dededc);
}
.workbench::after {
  content: "";
  position: absolute;
  right: 4px;
  top: 5px;
  border: 2px solid transparent;
  border-top-color: #222;
  border-bottom: none;
}

/* left dock */
.workspace {
  display: flex;
  flex: 1;
  min-height: 0;
}
.dock {
  display: flex;
  flex-direction: column;
  flex: none;
  width: 187px;
  padding-right: 3px;
}
.dock-title {
  display: flex;
  align-items: center;
  justify-content: space-between;
  height: 10px;
  padding: 0 1px;
}
.dock-title h2 {
  font-weight: normal;
}
.dock-title button,
.dock-title svg {
  display: block;
  width: 6px;
  height: 6px;
}
.tabs {
  display: flex;
  align-items: flex-end;
  height: 12px;
}
.tab {
  height: 10px;
  padding: 0 2px;
  border: 1px solid #bcbcba;
  border-bottom: none;
  border-radius: 2px 2px 0 0;
  background: #dfdfdd;
}
.tab.active {
  height: 11px;
  padding: 0 3px 0 2px;
  background: #f8f8f8;
}
.tree-box {
  height: 177px;
  flex: none;
  border: 1px solid #b6b6b4;
  background: #fff;
}
.tree-head {
  height: 8px;
  background: #ebebea;
}
.tree-head span {
  display: block;
  width: 95px;
  padding-left: 1px;
  background: #fff;
  line-height: 8px;
}
.tree {
  display: grid;
  grid-template-rows: repeat(8, 1fr);
  height: 60px;
  margin: 0;
  padding: 0 0 0 1px;
  list-style: none;
  color: #222;
}
.tree li {
  display: flex;
  align-items: center;
  min-height: 0;
}
.tree svg {
  width: 7px;
  height: 7px;
  margin-right: 1px;
}
.tree i {
  display: flex;
  width: 8px;
}
.tree .lv1 { padding-left: 2px; }
.tree .lv2 { padding-left: 10px; }
.tree .lv3 { padding-left: 18px; }
.tree .lv4 { padding-left: 26px; }
.tree .lv5 { padding-left: 41px; }
.tree .bold { font-weight: bold; color: #000; }
.tree .hid { color: #999; }
.selected {
  display: flex;
  align-items: center;
  gap: 2px;
  width: 53px;
  background: #ffff00;
  color: #a0a040;
}
.props {
  flex: 1;
  margin: 2px 0 0 1px;
  border: 1px solid #b6b6b4;
  background: #fff;
}
.props table {
  width: 100%;
  border-collapse: collapse;
  table-layout: fixed;
}
.props th {
  height: 9px;
  padding: 0 2px;
  font-weight: normal;
  text-align: left;
  border-bottom: 1px solid #e4e4e4;
}
.props .name {
  width: 41px;
  border-right: 1px solid #e4e4e4;
}
.slant-tabs {
  display: flex;
  gap: 2px;
  height: 12px;
  padding-left: 2px;
  background: #fff;
  border-bottom: 1px solid #d4d4d2;
}
.slant {
  position: relative;
  z-index: 0;
  height: 11px;
  padding: 0 2px;
}
.slant::before {
  content: "";
  position: absolute;
  inset: 0;
  z-index: -1;
  border: 1px solid #888;
  border-top: none;
  background: #e4e4e2;
  transform: perspective(20px) rotateX(-20deg);
}
.slant.active::before {
  background: #fff;
}

/* 3D view */
.mdi {
  display: flex;
  flex-direction: column;
  flex: 1;
  min-width: 0;
}
.scene {
  display: block;
  flex: 1;
  width: 100%;
  min-height: 0;
  background: linear-gradient(#333366, #adadc8);
}
.grid path {
  fill: none;
  stroke: #c8c8d4;
  stroke-width: 1;
  stroke-dasharray: 2 2;
  opacity: .5;
}
.edge {
  fill: none;
  stroke: #1c1c24;
  stroke-width: 1;
}
.profile {
  fill: none;
  stroke: #c6c6c2;
  stroke-width: 1;
  stroke-dasharray: 3 2;
}
.dim {
  fill: none;
  stroke: #f03018;
  stroke-width: 1;
}
.pts {
  fill: #ff2a08;
}
.dim-text {
  font-family: "Liberation Sans", Arial, sans-serif;
  fill: #c8281c;
}
.axes text {
  fill: #333;
}
.doc-tabs {
  display: flex;
  align-items: flex-start;
  height: 14px;
  flex: none;
}
.doc-tab {
  display: flex;
  align-items: center;
  gap: 3px;
  height: 12px;
  padding: 0 3px 0 2px;
  border: 1px solid #c4c4c2;
  border-top: none;
  background: #e2e2e0;
}
.doc-tab.active {
  height: 13px;
  background: #fff;
}
.doc-tab svg {
  display: block;
  width: 6px;
  height: 6px;
}
.doc-tab .logo {
  width: 7px;
  height: 7px;
}
.statusbar {
  height: 11px;
  flex: none;
}
```
